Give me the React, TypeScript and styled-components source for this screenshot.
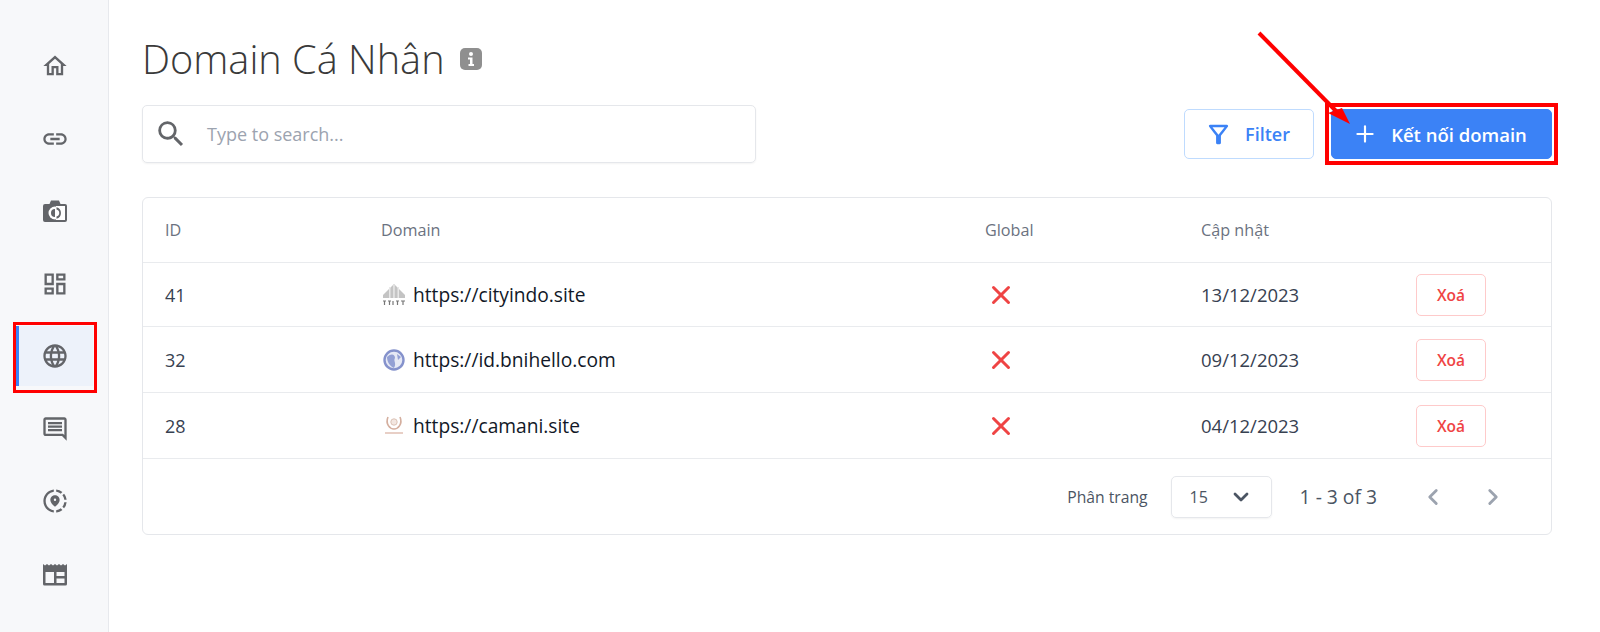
import React from "react";
import styled, { createGlobalStyle } from "styled-components";
import {
  MdOutlineHome,
  MdLink,
  MdOutlineDashboard,
  MdLanguage,
  MdOutlineInsertComment,
  MdOutlineShareLocation,
  MdSearch,
  MdOutlineFilterAlt,
} from "react-icons/md";
import { ChevronDown, ChevronLeft, ChevronRight, Plus, X } from "lucide-react";

const GlobalStyle = createGlobalStyle`
  html, body {
    margin: 0;
    padding: 0;
    background: #fff;
    font-family: "Open Sans", "Noto Sans", sans-serif;
    color: #1f2937;
  }
  *, *::before, *::after { box-sizing: border-box; }
`;

const Page = styled.div`
  position: relative;
  display: flex;
  width: 1600px;
  height: 632px;
  overflow: hidden;
`;

const Sidebar = styled.nav`
  width: 109px;
  flex-shrink: 0;
  display: flex;
  flex-direction: column;
  align-items: flex-start;
  padding: 36px 0 0 16px;
  gap: 12.5px;
  background: #f7f8fa;
  border-right: 1px solid #e7e9ed;
`;

const NavItem = styled.div<{ $active?: boolean }>`
  position: relative;
  width: 77px;
  height: 60px;
  display: flex;
  align-items: center;
  justify-content: center;
  color: #636569;
  font-size: 28px;
  background: ${(p) => (p.$active ? "#edf2fa" : "transparent")};
  border-left: ${(p) => (p.$active ? "3px solid #3b82f6" : "none")};
  padding-right: ${(p) => (p.$active ? "3px" : "0")};

  ${(p) =>
    p.$active &&
    `&::after {
      content: "";
      position: absolute;
      left: -6px;
      top: -4px;
      width: 84px;
      height: 71px;
      border: 3px solid #f00;
    }`}
`;

const Main = styled.main`
  flex: 1;
  padding: 29px 48px 0 33px;
`;

const TitleRow = styled.div`
  display: flex;
  align-items: center;
  gap: 14px;
  height: 60px;
`;

const Title = styled.h1`
  margin: 0;
  font-size: 39.7px;
  font-weight: 300;
  color: #3a3a3a;
`;

const Toolbar = styled.div`
  display: flex;
  align-items: center;
  justify-content: space-between;
  margin-top: 16px;
  height: 58px;
`;

const SearchBox = styled.div`
  width: 614px;
  height: 58px;
  display: flex;
  align-items: center;
  gap: 19px;
  padding-left: 11px;
  border: 1px solid #e5e7eb;
  border-radius: 5px;
  box-shadow: 0 1px 2px rgba(0, 0, 0, 0.05);
  color: #636569;
  font-size: 34px;
`;

const Placeholder = styled.span`
  font-size: 18px;
  color: #9ca3af;
`;

const Actions = styled.div`
  display: flex;
  align-items: center;
  gap: 17px;
`;

const Button = styled.button<{ $primary?: boolean }>`
  position: relative;
  height: 50px;
  width: ${(p) => (p.$primary ? "221px" : "130px")};
  display: flex;
  align-items: center;
  justify-content: center;
  gap: ${(p) => (p.$primary ? "13px" : "12px")};
  padding: 0 4px 0 0;
  font-family: inherit;
  font-size: ${(p) => (p.$primary ? "18.5px" : "18px")};
  font-weight: 600;
  border-radius: 5px;
  border: 1px solid ${(p) => (p.$primary ? "#3b82f6" : "#bfdbfe")};
  background: ${(p) => (p.$primary ? "#3b82f6" : "#fff")};
  color: ${(p) => (p.$primary ? "#fff" : "#3b82f6")};
`;

const Highlight = styled.span`
  position: absolute;
  left: -7px;
  top: -7px;
  right: -7px;
  bottom: -7px;
  border: 4px solid #f00;
`;

const Arrow = styled.svg`
  position: absolute;
  left: 1250px;
  top: 25px;
  width: 110px;
  height: 110px;
`;

const Card = styled.section`
  margin-top: 34px;
  border: 1px solid #e5e7eb;
  border-radius: 6px;
`;

const Row = styled.div<{ $height: number }>`
  display: grid;
  grid-template-columns: 216px 604px 216px 215px 1fr;
  align-items: center;
  height: ${(p) => p.$height}px;
  padding-left: 22px;
  border-bottom: 1px solid #e9ebee;
`;

const HeadCell = styled.div`
  font-size: 16.2px;
  font-weight: 500;
  color: #6b7280;
`;

const Cell = styled.div`
  font-size: 18px;
  color: #374151;
`;

const DateCell = styled(Cell)`
  font-size: 18.5px;
`;

const MarkCell = styled.div`
  display: flex;
  align-items: center;
  padding-left: 1px;
`;

const DomainCell = styled.div`
  display: flex;
  align-items: center;
  gap: 6px;
  font-size: 19.2px;
  font-weight: 500;
  color: #111827;
`;

const DeleteButton = styled.button`
  width: 70px;
  height: 42px;
  font-family: inherit;
  font-size: 15.5px;
  font-weight: 600;
  color: #ef4444;
  background: #fff;
  border: 1px solid #fecaca;
  border-radius: 5px;
`;

const Pager = styled.div`
  display: flex;
  align-items: center;
  justify-content: flex-end;
  height: 75px;
  padding-right: 45px;
`;

const PagerLabel = styled.span`
  font-size: 15.7px;
  color: #4b5563;
  margin-right: 23px;
`;

const PageSelect = styled.div`
  width: 101px;
  height: 42px;
  display: flex;
  align-items: center;
  justify-content: space-between;
  padding: 0 18px;
  font-size: 16px;
  color: #4b5563;
  border: 1px solid #e5e7eb;
  border-radius: 5px;
  box-shadow: 0 1px 2px rgba(0, 0, 0, 0.05);
`;

const PageInfo = styled.span`
  margin: 0 43px 0 28px;
  font-size: 19.3px;
  color: #4b5563;
`;

const PageNav = styled.div`
  display: flex;
  gap: 34px;
  color: #9ca3af;
`;

const CameraIcon = () => (
  <svg width="28" height="28" viewBox="0 0 28 28">
    <path
      d="M4 7 H8.5 L10 3.5 H18 L19.5 7 H24 A2 2 0 0 1 26 9 V23 A2 2 0 0 1 24 25 H4 A2 2 0 0 1 2 23 V9 A2 2 0 0 1 4 7 Z"
      fill="currentColor"
    />
    <rect x="15" y="9" width="9" height="14" fill="#fff" />
    <circle cx="14" cy="16" r="6.5" fill="#fff" />
    <path d="M14 12 A4 4 0 0 0 14 20 Z" fill="currentColor" />
    <path d="M15.5 10.2 A6 6 0 0 1 15.5 21.8 L15.5 19.5 A3.6 3.6 0 0 0 15.5 12.5 Z" fill="currentColor" />
  </svg>
);

const NewsIcon = () => (
  <svg width="28" height="28" viewBox="0 0 28 28" fill="currentColor">
    <path
      d="M2 4 L4 5.5 L6 4 L8 5.5 L10 4 L12 5.5 L14 4 L16 5.5 L18 4 L20 5.5 L22 4 L24 5.5 L26 4 V24 A1.5 1.5 0 0 1 24.5 25.5 H3.5 A1.5 1.5 0 0 1 2 24 Z M4.5 12 V23 H13 V12 Z M15.5 12 V16 H23.5 V12 Z M15.5 18.5 V23 H23.5 V18.5 Z"
      fillRule="evenodd"
    />
  </svg>
);

const InfoIcon = () => (
  <svg width="24" height="24" viewBox="0 0 24 24">
    <rect x="1" y="1" width="22" height="22" rx="5" fill="#8f8f8f" />
    <circle cx="12" cy="7" r="2" fill="#fff" />
    <path d="M9 10.5 H13.5 V17 H15 V19 H9.5 V17 H11 V12.5 H9 Z" fill="#fff" />
  </svg>
);

const CityIcon = () => (
  <svg width="26" height="24" viewBox="0 0 26 24">
    <path d="M13 1 L24 12 V15 H2 V12 Z" fill="#c4c4c4" />
    <rect x="8" y="4" width="1.5" height="11" fill="#e8e8e8" />
    <rect x="12.2" y="2" width="1.5" height="13" fill="#e8e8e8" />
    <rect x="16.5" y="4" width="1.5" height="11" fill="#e8e8e8" />
    <path
      d="M2 18 H5 M3.5 22 V18 M7 18 H10 M8.5 22 V18 M12 18 V22 M15 18 H18 M16.5 22 V18 M20 18 H24 M22 22 V18"
      stroke="#777"
      strokeWidth="1.2"
    />
  </svg>
);

const GlobeIcon = () => (
  <svg width="26" height="24" viewBox="0 0 26 24">
    <circle cx="13" cy="12" r="9.5" fill="#e6e9f5" stroke="#8592cc" strokeWidth="2.4" />
    <path d="M6 9 C10 5 14 6 14 10 C12 13 16 15 13 20 C9 18 6 14 6 9 Z M16 6 L20 9 L17 12 Z" fill="#93a0d4" />
  </svg>
);

const CamaniIcon = () => (
  <svg width="26" height="24" viewBox="0 0 26 24">
    <path d="M7 3 C4 10 9 15 13 15 C17 15 22 10 19 3" fill="none" stroke="#d4ae9e" strokeWidth="1.6" />
    <circle cx="13" cy="8" r="3.2" fill="#f3e7e1" stroke="#dcc3b6" strokeWidth="1" />
    <rect x="4" y="18" width="18" height="2" fill="#e8cfc6" />
  </svg>
);

const rows = [
  { id: 41, url: "https://cityindo.site", date: "13/12/2023", icon: <CityIcon />, height: 64 },
  { id: 32, url: "https://id.bnihello.com", date: "09/12/2023", icon: <GlobeIcon />, height: 66 },
  { id: 28, url: "https://camani.site", date: "04/12/2023", icon: <CamaniIcon />, height: 66 },
];

export default function App() {
  return (
    <Page>
      <GlobalStyle />
      <Sidebar>
        <NavItem><MdOutlineHome /></NavItem>
        <NavItem><MdLink /></NavItem>
        <NavItem><CameraIcon /></NavItem>
        <NavItem><MdOutlineDashboard /></NavItem>
        <NavItem $active><MdLanguage /></NavItem>
        <NavItem><MdOutlineInsertComment /></NavItem>
        <NavItem><MdOutlineShareLocation /></NavItem>
        <NavItem><NewsIcon /></NavItem>
      </Sidebar>
      <Main>
        <TitleRow>
          <Title>Domain Cá Nhân</Title>
          <InfoIcon />
        </TitleRow>
        <Toolbar>
          <SearchBox>
            <MdSearch />
            <Placeholder>Type to search...</Placeholder>
          </SearchBox>
          <Actions>
            <Button>
              <MdOutlineFilterAlt size={29} />
              Filter
            </Button>
            <Button $primary>
              <Plus size={26} strokeWidth={2} />
              Kết nối domain
              <Highlight />
            </Button>
          </Actions>
        </Toolbar>
        <Card>
          <Row $height={65}>
            <HeadCell>ID</HeadCell>
            <HeadCell>Domain</HeadCell>
            <HeadCell>Global</HeadCell>
            <HeadCell>Cập nhật</HeadCell>
          </Row>
          {rows.map((r) => (
            <Row key={r.id} $height={r.height}>
              <Cell>{r.id}</Cell>
              <DomainCell>
                {r.icon}
                {r.url}
              </DomainCell>
              <MarkCell>
                <X size={30} color="#ef4444" strokeWidth={2.4} />
              </MarkCell>
              <DateCell>{r.date}</DateCell>
              <DeleteButton>Xoá</DeleteButton>
            </Row>
          ))}
          <Pager>
            <PagerLabel>Phân trang</PagerLabel>
            <PageSelect>
              15
              <ChevronDown size={24} strokeWidth={2.8} color="#4b5563" />
            </PageSelect>
            <PageInfo>1 - 3 of 3</PageInfo>
            <PageNav>
              <ChevronLeft size={26} strokeWidth={2.6} />
              <ChevronRight size={26} strokeWidth={2.6} />
            </PageNav>
          </Pager>
        </Card>
      </Main>
      <Arrow viewBox="0 0 110 110">
        <path d="M9 8 L88 88" stroke="#f00" strokeWidth="4" />
        <path d="M100 99 L78 88 L92 83 Z" fill="#f00" />
      </Arrow>
    </Page>
  );
}
